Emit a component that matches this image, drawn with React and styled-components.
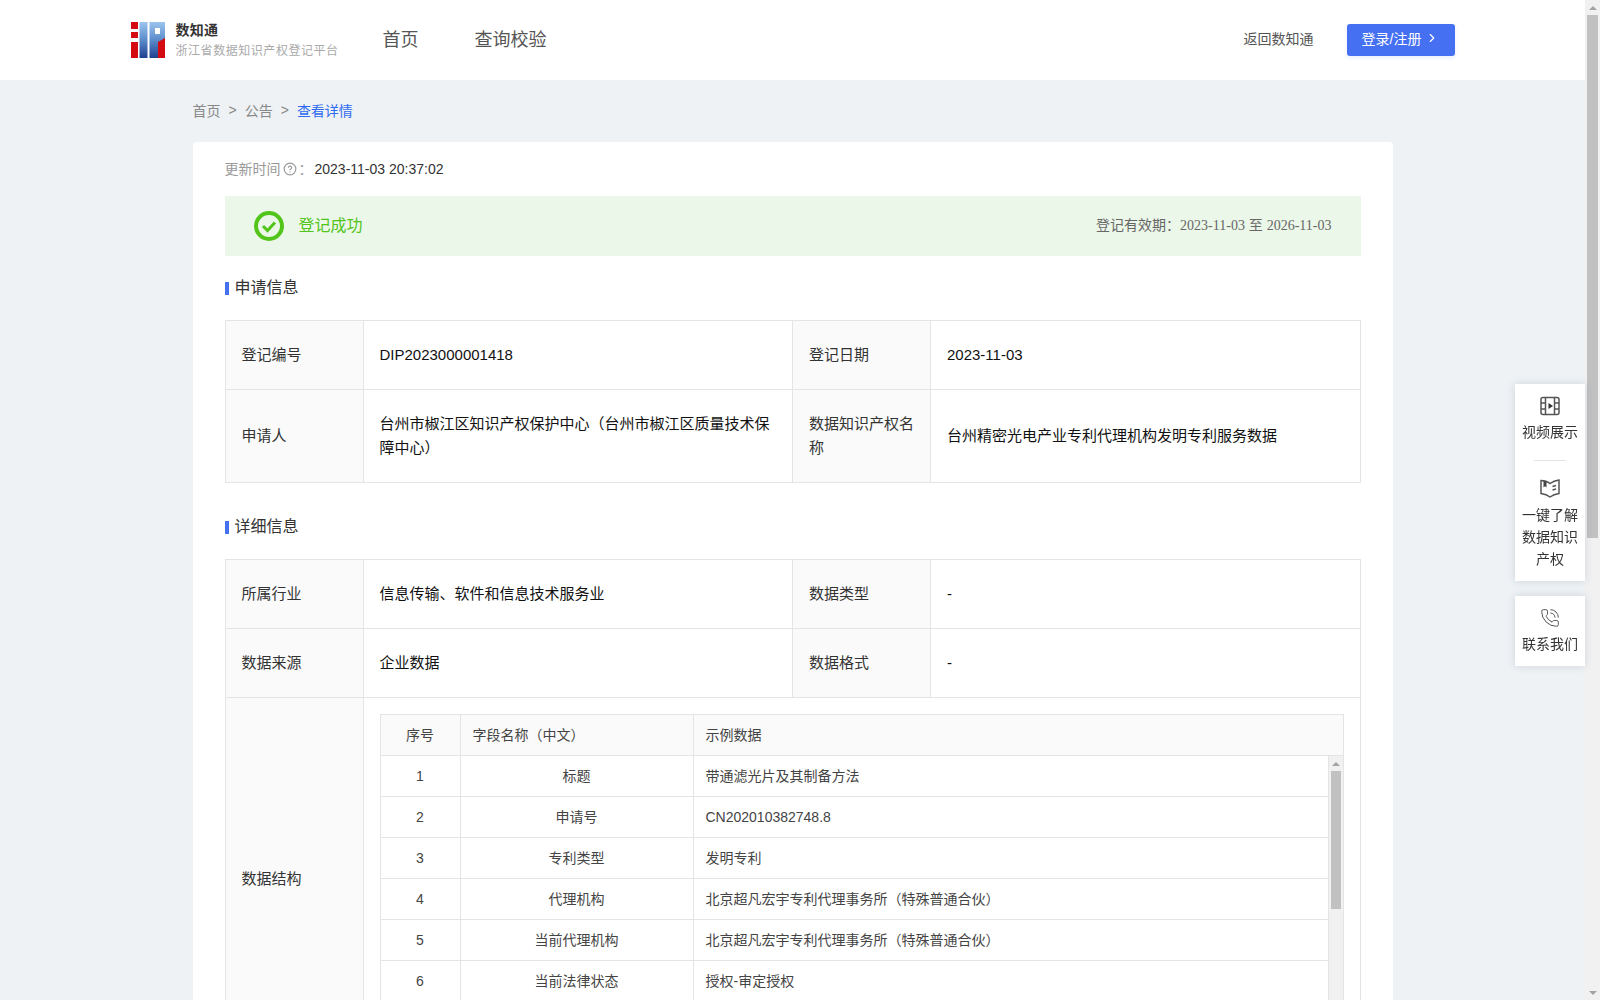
import React from 'react';
import styled, { createGlobalStyle } from 'styled-components';
import { ChevronRight, CircleHelp, PhoneCall } from 'lucide-react';

const GlobalStyle = createGlobalStyle`
  html, body {
    margin: 0;
    padding: 0;
    background: #eef2f5;
    font-family: "Liberation Sans", "Noto Sans CJK SC", sans-serif;
    color: #333;
  }
  * { box-sizing: border-box; }
`;

const Frame = styled.div`
  display: flex;
  height: 100vh;
  overflow: hidden;
`;

const Page = styled.div`
  flex: 1;
  min-width: 0;
  overflow: hidden;
`;

const Track = styled.div`
  flex: none;
  width: ${p => p.$width}px;
  display: flex;
  flex-direction: column;
  background: #f1f1f1;
`;

const Arrow = styled.div`
  flex: none;
  height: 15px;
  margin-top: ${p => (p.$down ? 'auto' : '0')};
  display: flex;
  align-items: center;
  justify-content: center;

  &::before {
    content: '';
    border-left: 4px solid transparent;
    border-right: 4px solid transparent;
    ${p => (p.$down ? 'border-top' : 'border-bottom')}: 4px solid #a3a3a3;
  }
`;

const Thumb = styled.div`
  flex: none;
  height: ${p => p.$height}px;
  margin: 0 2px;
  background: #c1c1c1;
`;

const Header = styled.header`
  height: 80px;
  background: #fff;
`;

const HeaderInner = styled.div`
  width: 1324px;
  height: 100%;
  margin: 0 auto;
  display: flex;
  align-items: center;
`;

const Brand = styled.div`
  display: flex;
  align-items: center;
  gap: 11px;
  width: 252px;
`;

const BrandText = styled.div`
  display: flex;
  flex-direction: column;
  gap: 2px;
`;

const BrandName = styled.div`
  font-size: 14px;
  line-height: 19px;
  font-weight: 700;
  color: #333;
  letter-spacing: 0.3px;
`;

const BrandSub = styled.div`
  font-size: 12px;
  line-height: 18px;
  color: #aaa;
  letter-spacing: 0.55px;
  white-space: nowrap;
`;

const Nav = styled.nav`
  display: flex;
  gap: 56px;
  flex: 1;
`;

const NavLink = styled.a`
  font-size: 18px;
  padding-bottom: 4px;
  color: #555;
`;

const BackLink = styled.a`
  font-size: 14px;
  padding-bottom: 5px;
  color: #555;
  margin-right: 33px;
`;

const LoginButton = styled.button`
  width: 108px;
  height: 32px;
  padding: 0 0 4px;
  border: 0;
  border-radius: 3px;
  background: #4570f2;
  color: #fff;
  font: inherit;
  font-size: 14px;
  display: flex;
  align-items: center;
  justify-content: center;
  gap: 4px;
  box-shadow: 0 2px 4px rgba(69, 112, 242, 0.12);
`;

const Main = styled.main`
  width: 1200px;
  margin: 0 auto;
`;

const Breadcrumb = styled.div`
  height: 62px;
  padding-bottom: 2px;
  display: flex;
  align-items: center;
  gap: 8px;
  font-size: 14px;
  color: #888;
`;

const Crumb = styled.span`
  color: ${p => (p.$active ? '#2f6bf0' : '#888')};
`;

const Card = styled.section`
  background: #fff;
  border-radius: 4px 4px 0 0;
  padding: 16px 32px 32px;
`;

const UpdateRow = styled.div`
  display: flex;
  align-items: center;
  height: 22px;
  font-size: 14px;
  color: #999;
`;

const UpdateLabel = styled.span`
  display: flex;
  align-items: center;
  gap: 2px;
  padding-bottom: 2px;

  svg {
    margin-top: 2px;
  }
`;

const UpdateValue = styled.span`
  margin-left: 2px;
  color: #333;
`;

const Alert = styled.div`
  height: 60px;
  margin-top: 16px;
  padding: 0 29px;
  background: #ebf7e8;
  display: flex;
  align-items: center;
  justify-content: space-between;
`;

const AlertLeft = styled.div`
  display: flex;
  align-items: center;
  gap: 15px;
`;

const AlertText = styled.span`
  padding-bottom: 5px;
  font-size: 16px;
  color: #52c41a;
`;

const AlertRight = styled.div`
  padding-bottom: 5px;
  font-size: 14px;
  color: #666;
`;

const SerifDate = styled.span`
  font-family: "Liberation Serif", serif;
`;

const SectionTitle = styled.h3`
  margin: ${p => p.$top}px 0 22px;
  height: 22px;
  padding-bottom: 2px;
  display: flex;
  align-items: center;
  gap: 6px;
  font-size: 16px;
  font-weight: 400;
  color: #333;

  &::before {
    content: '';
    width: 4px;
    height: 13px;
    margin-top: 4px;
    background: #4570f2;
  }
`;

const InfoTable = styled.table`
  width: 1136px;
  table-layout: fixed;
  border-collapse: collapse;
  font-size: 15px;
`;

const Label = styled.td`
  width: 138px;
  padding: 0 16px;
  height: ${p => p.$h || 69}px;
  background: #fafafa;
  border: 1px solid #e4e4e4;
  color: #333;
  line-height: 24px;
`;

const Value = styled.td`
  padding: ${p => (p.$nested ? '16px' : '0 16px')};
  height: ${p => p.$h || 69}px;
  border: 1px solid #e4e4e4;
  color: #111;
  line-height: 24px;
`;

const FieldTable = styled.div`
  border: 1px solid #e4e4e4;
  border-bottom: 0;
  font-size: 14px;
  color: #444;
`;

const FieldRow = styled.div`
  display: grid;
  grid-template-columns: 80px 233px 1fr;
  height: 41px;
  background: ${p => (p.$head ? '#fafafa' : '#fff')};
  border-bottom: 1px solid #e4e4e4;
`;

const FieldCell = styled.div`
  display: flex;
  align-items: center;
  justify-content: ${p => (p.$center ? 'center' : 'flex-start')};
  padding: 0 12px 1px;
  border-right: ${p => (p.$open ? '0' : '1px solid #e4e4e4')};
`;

const FieldBody = styled.div`
  display: flex;
  height: 288px;
  overflow: hidden;
`;

const FieldRows = styled.div`
  flex: 1;
  min-width: 0;
`;

const Float = styled.aside`
  position: fixed;
  top: 384px;
  right: 15px;
  width: 70px;
  display: flex;
  flex-direction: column;
  gap: 15px;
`;

const FloatCard = styled.div`
  background: #fff;
  box-shadow: 0 0 8px rgba(60, 80, 110, 0.18);
  padding: 12px 0 11px;
  display: flex;
  flex-direction: column;
  align-items: center;
`;

const FloatItem = styled.a`
  display: flex;
  flex-direction: column;
  align-items: center;
  gap: 5px;
  width: 56px;
  font-size: 14px;
  line-height: 22px;
  color: #333;
  text-align: center;
`;

const FloatDivider = styled.div`
  width: 32px;
  height: 1px;
  margin: 17px 0;
  background: #e4e4e4;
`;

const Logo = () => (
  <svg width="34" height="36" viewBox="0 0 34 36">
    <defs>
      <linearGradient id="logoBlue" x1="0" y1="0" x2="0" y2="1">
        <stop offset="0" stopColor="#9cc4ee" />
        <stop offset="0.5" stopColor="#5b8ccb" />
        <stop offset="1" stopColor="#1f3f8f" />
      </linearGradient>
    </defs>
    <path d="M0 0h7v7H0zM0 10h7v6H0zM0 20h7v16H0z" fill="#d40b12" />
    <rect x="8.500" y="0" width="8" height="36" fill="url(#logoBlue)" />
    <path d="M18.500 0H34v17l-7 4v15h-8.500z M24 6v6h5V6z" fill="url(#logoBlue)" fillRule="evenodd" />
    <path d="M34 16v20h-7V20z" fill="#d40b12" />
  </svg>
);

const CheckCircle = () => (
  <svg width="30" height="30" viewBox="0 0 30 30" fill="none" stroke="#52c41a">
    <circle cx="15" cy="15" r="13" strokeWidth="4" />
    <path d="M9 15l4.500 4.500L21 11.500" strokeWidth="3" />
  </svg>
);

const FilmIcon = () => (
  <svg width="20" height="20" viewBox="0 0 20 20" fill="none" stroke="#555" strokeWidth="1.500">
    <rect x="1" y="1.500" width="18" height="17" rx="2" />
    <path d="M5.500 2v16M14.500 2v16M1 7h4.500M1 13h4.500M14.500 7H19M14.500 13H19" />
    <path d="M8.500 7l4.500 3-4.500 3z" fill="#333" stroke="none" />
  </svg>
);

const BookIcon = () => (
  <svg width="20" height="21" viewBox="0 0 20 21" fill="none" stroke="#555" strokeWidth="1.500">
    <path d="M1 2.500c3.500 0 6.500 1 9 3 2-1.500 5-3 9-3.500v13.500c-4 .5-7 2-9 3.500-2.500-2-5.500-3-9-3.500z" />
    <path d="M12.500 8.500l3.500-1M12.500 12l3.500-1" />
    <path d="M3.500 2.500v7l1.500-1.200 1.500 1.200V3.500z" fill="#444" stroke="none" />
  </svg>
);

const fields = [
  ['1', '标题', '带通滤光片及其制备方法'],
  ['2', '申请号', 'CN202010382748.8'],
  ['3', '专利类型', '发明专利'],
  ['4', '代理机构', '北京超凡宏宇专利代理事务所（特殊普通合伙）'],
  ['5', '当前代理机构', '北京超凡宏宇专利代理事务所（特殊普通合伙）'],
  ['6', '当前法律状态', '授权-审定授权'],
];

export default function App() {
  return (
    <Frame>
      <GlobalStyle />
      <Page>
        <Header>
          <HeaderInner>
            <Brand>
              <Logo />
              <BrandText>
                <BrandName>数知通</BrandName>
                <BrandSub>浙江省数据知识产权登记平台</BrandSub>
              </BrandText>
            </Brand>
            <Nav>
              <NavLink>首页</NavLink>
              <NavLink>查询校验</NavLink>
            </Nav>
            <BackLink>返回数知通</BackLink>
            <LoginButton>
              登录/注册
              <ChevronRight size={14} />
            </LoginButton>
          </HeaderInner>
        </Header>

        <Main>
          <Breadcrumb>
            <Crumb>首页</Crumb>
            <span>&gt;</span>
            <Crumb>公告</Crumb>
            <span>&gt;</span>
            <Crumb $active>查看详情</Crumb>
          </Breadcrumb>

          <Card>
            <UpdateRow>
              <UpdateLabel>
                更新时间
                <CircleHelp size={14} />
                ：
              </UpdateLabel>
              <UpdateValue>2023-11-03 20:37:02</UpdateValue>
            </UpdateRow>

            <Alert>
              <AlertLeft>
                <CheckCircle />
                <AlertText>登记成功</AlertText>
              </AlertLeft>
              <AlertRight>
                登记有效期：<SerifDate>2023-11-03</SerifDate> 至 <SerifDate>2026-11-03</SerifDate>
              </AlertRight>
            </Alert>

            <SectionTitle $top={20}>申请信息</SectionTitle>
            <InfoTable>
              <tbody>
                <tr>
                  <Label>登记编号</Label>
                  <Value>DIP2023000001418</Value>
                  <Label>登记日期</Label>
                  <Value>2023-11-03</Value>
                </tr>
                <tr>
                  <Label $h={93}>申请人</Label>
                  <Value $h={93}>台州市椒江区知识产权保护中心（台州市椒江区质量技术保障中心）</Value>
                  <Label $h={93}>数据知识产权名称</Label>
                  <Value $h={93}>台州精密光电产业专利代理机构发明专利服务数据</Value>
                </tr>
              </tbody>
            </InfoTable>

            <SectionTitle $top={32}>详细信息</SectionTitle>
            <InfoTable>
              <tbody>
                <tr>
                  <Label>所属行业</Label>
                  <Value>信息传输、软件和信息技术服务业</Value>
                  <Label>数据类型</Label>
                  <Value>-</Value>
                </tr>
                <tr>
                  <Label>数据来源</Label>
                  <Value>企业数据</Value>
                  <Label>数据格式</Label>
                  <Value>-</Value>
                </tr>
                <tr>
                  <Label>数据结构</Label>
                  <Value colSpan={3} $nested>
                    <FieldTable>
                      <FieldRow $head>
                        <FieldCell $center>序号</FieldCell>
                        <FieldCell>字段名称（中文）</FieldCell>
                        <FieldCell $open>示例数据</FieldCell>
                      </FieldRow>
                      <FieldBody>
                        <FieldRows>
                          {fields.map(([no, name, sample]) => (
                            <FieldRow key={no}>
                              <FieldCell $center>{no}</FieldCell>
                              <FieldCell $center>{name}</FieldCell>
                              <FieldCell>{sample}</FieldCell>
                            </FieldRow>
                          ))}
                        </FieldRows>
                        <Track $width={14}>
                          <Arrow />
                          <Thumb $height={138} />
                        </Track>
                      </FieldBody>
                    </FieldTable>
                  </Value>
                </tr>
              </tbody>
            </InfoTable>
          </Card>
        </Main>

        <Float>
          <FloatCard>
            <FloatItem>
              <FilmIcon />
              视频展示
            </FloatItem>
            <FloatDivider />
            <FloatItem>
              <BookIcon />
              一键了解数据知识产权
            </FloatItem>
          </FloatCard>
          <FloatCard>
            <FloatItem>
              <PhoneCall size={20} strokeWidth={1.2} color="#555" />
              联系我们
            </FloatItem>
          </FloatCard>
        </Float>
      </Page>
      <Track $width={15}>
        <Arrow />
        <Thumb $height={523} />
        <Arrow $down />
      </Track>
    </Frame>
  );
}
